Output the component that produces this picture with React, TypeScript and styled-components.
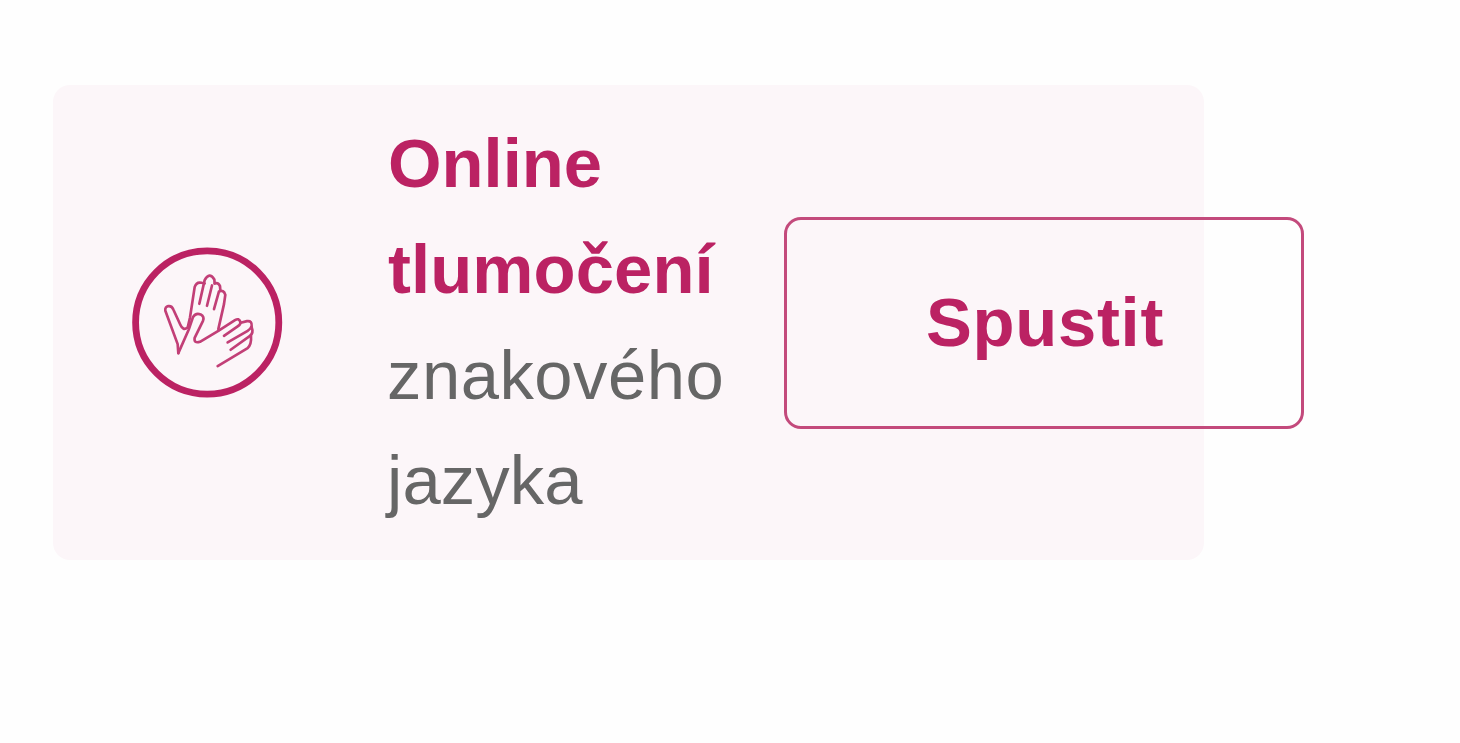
import React from "react";
import styled, { createGlobalStyle } from "styled-components";

const GlobalStyle = createGlobalStyle`
  * {
    box-sizing: border-box;
  }
  body {
    margin: 0;
    background: #fefefe;
    font-family: "Liberation Sans", Arial, sans-serif;
    overflow: hidden;
  }
`;

const HandsIcon = () => (
  <Icon viewBox="0 0 151 151" fill="none" stroke="#bb2263">
    <circle cx="75.2" cy="75.5" r="71.6" strokeWidth="6.8" />
    <g
      transform="translate(23 17.8) scale(0.3333)"
      stroke="#c23f77"
      strokeWidth="8"
      strokeLinecap="round"
      strokeLinejoin="round"
    >
      {/* raised hand */}
      <path d="M70 265 L68 238 L31 138 C28 122 49 118 55 134 L76 180 Q84 199 98 188 L105 158 L119 67 Q124 50 140 54 L149 56" />
      <path d="M133 117 L149 46 Q163 20 178 44 L179 56" />
      <path d="M156 123 L171 62 M179 56 Q190 52 195 64 L196 76" />
      <path d="M177 133 L192 80 Q206 74 211 90 L207 118 L190 193" />
      {/* open hand, palm to the side */}
      <path d="M70 265 L101 195 L114 157 Q122 143 137 149 Q149 156 144 168 L119 219 Q116 237 135 231 L190 198 L240 166 Q252 159 256 171 Q258 178 248 185 L207 213" />
      <path d="M257 174 L276 169 Q292 167 290 184 Q288 192 278 198 L218 233" />
      <path d="M290 187 Q297 205 284 214 L227 255" />
      <path d="M288 213 Q290 238 278 250 L188 304" />
    </g>
  </Icon>
);

const App = () => {
  return (
    <Container>
      <GlobalStyle />
      <Banner>
        <HandsIcon />
        <Text>
          <Line bold spacing={0}>
            Online
          </Line>
          <Line bold spacing={0.1}>
            tlumočení
          </Line>
          <Line spacing={0.5}>znakového</Line>
          <Line spacing={0.1}>jazyka</Line>
        </Text>
        <StartButton type="button">Spustit</StartButton>
      </Banner>
    </Container>
  );
};

const Container = styled.main`
  height: 743px;
  padding: 85px 0 0 53px;
`;

const Banner = styled.section`
  display: flex;
  align-items: center;
  width: 1151px;
  height: 475px;
  padding-left: 79px;
  border-radius: 17px;
  background: #fcf6f9;
`;

const Icon = styled.svg`
  flex: none;
  width: 151px;
  height: 151px;
`;

const Text = styled.div`
  flex: none;
  width: 397px;
  margin-left: 104px;
`;

const Line = styled.div.withConfig({
  shouldForwardProp: (prop) => !["bold", "spacing"].includes(prop),
})<{ bold?: boolean; spacing: number }>`
  padding-left: ${(props) => (props.bold ? 1 : 0)}px;
  font-size: 68.8px;
  line-height: 105.6px;
  letter-spacing: ${(props) => props.spacing}px;
  white-space: nowrap;
  color: ${(props) => (props.bold ? "#bb2263" : "#666666")};
  font-weight: ${(props) => (props.bold ? 700 : 400)};
`;

const StartButton = styled.button`
  flex: none;
  width: 520px;
  height: 212px;
  padding: 0 0 0 2px;
  border: 3px solid #c34a7c;
  border-radius: 17px;
  background: transparent;
  color: #bb2263;
  font-family: inherit;
  font-size: 68.8px;
  font-weight: 700;
  line-height: 105.6px;
  letter-spacing: 0.7px;
`;

export default App;
